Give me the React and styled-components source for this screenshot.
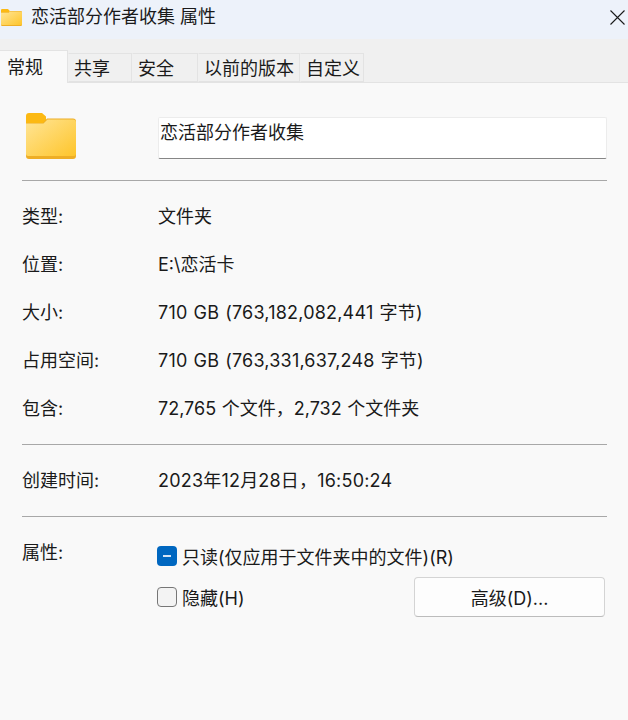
import styled, { createGlobalStyle } from "styled-components";

const GlobalStyle = createGlobalStyle`
  html, body {
    margin: 0;
    padding: 0;
    background: #f9f9f9;
  }
  body {
    font-family: Inter, "Noto Sans CJK SC", sans-serif;
    font-size: 18px;
    color: #1a1a1a;
  }
`;

const Window = styled.div`
  width: 628px;
  height: 720px;
  overflow: hidden;
  background: #f9f9f9;
`;

const TitleBar = styled.div`
  height: 39px;
  box-sizing: border-box;
  display: flex;
  align-items: center;
  background: #edf2fa;
  padding: 0 3px 5px 1px;
`;

const TitleText = styled.span`
  margin-left: 9px;
  line-height: 26px;
  flex: 1;
  white-space: nowrap;
`;

const TabStrip = styled.div`
  height: 44px;
  box-sizing: border-box;
  display: flex;
  align-items: flex-end;
  background: #f0f0f0;
  border-bottom: 1px solid #e3e3e3;
`;

const Tab = styled.div`
  box-sizing: border-box;
  width: ${({ $w }) => $w}px;
  height: ${({ $active }) => ($active ? "33px" : "29px")};
  margin-bottom: ${({ $active }) => ($active ? "-1px" : "0")};
  padding: 0 0 2px ${({ $active }) => ($active ? "7px" : "5px")};
  display: flex;
  align-items: center;
  white-space: nowrap;
  background: ${({ $active }) => ($active ? "#f9f9f9" : "#f0f0f0")};
  border: 1px solid #e3e3e3;
  border-left: ${({ $active }) => ($active ? "0" : "1px solid transparent")};
  border-bottom: ${({ $active }) => ($active ? "0" : "1px solid #e3e3e3")};
`;

const Body = styled.div`
  padding: 0 21px 0 22px;
`;

const HeaderRow = styled.div`
  height: 98px;
  box-sizing: border-box;
  display: flex;
  align-items: flex-start;
  border-bottom: 1px solid #a8a8a8;
`;

const IconCell = styled.div`
  width: 136px;
  padding: 30px 0 0 4px;
  box-sizing: border-box;
  flex: none;
`;

const NameBox = styled.div`
  margin-top: 34px;
  width: 450px;
  height: 42px;
  box-sizing: border-box;
  padding: 0 1px;
  line-height: 30px;
  background: #fff;
  border: 1px solid #ececec;
  border-bottom: 1px solid #868686;
  border-radius: 2px;
`;

const Section = styled.div`
  display: flex;
  flex-direction: column;
  padding: ${({ $pad }) => $pad};
  border-bottom: ${({ $last }) => ($last ? "0" : "1px solid #a8a8a8")};
`;

const Row = styled.div`
  height: 48px;
  line-height: 46px;
  display: flex;
  align-items: center;
`;

const Label = styled.div`
  width: 136px;
  flex: none;
`;

const Value = styled.div`
  white-space: nowrap;
  letter-spacing: ${({ $track }) => $track || 0}px;
  word-spacing: ${({ $word }) => $word || 0}px;
`;

const AttrGrid = styled.div`
  display: grid;
  grid-template-columns: 136px 1fr;
`;

const AttrLabel = styled.div`
  padding-top: 23px;
  line-height: 26px;
`;

const AttrList = styled.div`
  display: flex;
  flex-direction: column;
`;

const CheckRow = styled.div`
  height: ${({ $h }) => $h}px;
  padding-top: ${({ $top }) => $top || 0}px;
  box-sizing: border-box;
  display: flex;
  align-items: center;
  gap: 5px;
`;

const CheckMark = styled.span`
  width: 20px;
  height: 20px;
  box-sizing: border-box;
  margin-left: -1px;
  flex: none;
  display: flex;
  align-items: center;
  justify-content: center;
  border-radius: 4px;
  background: ${({ $on }) => ($on ? "#0067c0" : "#f3f3f3")};
  border: ${({ $on }) => ($on ? "0" : "1px solid #767676")};
`;

const Dash = styled.span`
  width: 8px;
  height: 2px;
  background: #d5e4f5;
`;

const AdvancedButton = styled.div`
  width: 191px;
  height: 40px;
  box-sizing: border-box;
  margin: 0 2px 0 auto;
  display: flex;
  align-items: center;
  justify-content: center;
  background: #fdfdfd;
  border: 1px solid #d4d4d4;
  border-bottom-color: #bcbcbc;
  border-radius: 4px;
`;

function FolderIcon({ width, height }) {
  return (
    <svg
      width={width}
      height={height}
      viewBox="0 0 50 46"
      preserveAspectRatio="none"
      style={{ display: "block" }}
    >
      <defs>
        <linearGradient id={`folder-${width}`} x1="0" y1="0" x2="1" y2="1">
          <stop offset="0" stopColor="#ffe596" />
          <stop offset="1" stopColor="#fec52b" />
        </linearGradient>
      </defs>
      <path d="M0 3a3 3 0 0 1 3-3h13l4 3.500v6.500H0z" fill="#fcb913" />
      <path d="M0 10h17l4-4.500h26a3 3 0 0 1 3 3V43a3 3 0 0 1-3 3H3a3 3 0 0 1-3-3z" fill="#eeae26" />
      <path d="M0 10.500h17.500l4-4h25.500a3 3 0 0 1 3 3V41a2 2 0 0 1-2 2H2a2 2 0 0 1-2-2z" fill={`url(#folder-${width})`} />
    </svg>
  );
}

function CloseIcon() {
  return (
    <svg width="15" height="15" viewBox="0 0 15 15" style={{ display: "block" }}>
      <path d="M.5.5l14 14M14.500.5l-14 14" stroke="#1a1a1a" strokeWidth="1.1" fill="none" />
    </svg>
  );
}

const tabs = [
  { name: "常规", w: 68, active: true },
  { name: "共享", w: 64 },
  { name: "安全", w: 66 },
  { name: "以前的版本", w: 102 },
  { name: "自定义", w: 64 },
];

const infoRows = [
  { label: "类型:", value: "文件夹" },
  { label: "位置:", value: "E:\\恋活卡" },
  { label: "大小:", value: "710 GB (763,182,082,441 字节)", track: 0.2, word: 0.8 },
  { label: "占用空间:", value: "710 GB (763,331,637,248 字节)", track: 0.2, word: 0.8 },
  { label: "包含:", value: "72,765 个文件，2,732 个文件夹", word: 0.6 },
];

export default function App() {
  return (
    <Window>
      <GlobalStyle />
      <TitleBar>
        <FolderIcon width={21} height={17} />
        <TitleText>恋活部分作者收集 属性</TitleText>
        <CloseIcon />
      </TitleBar>
      <TabStrip>
        {tabs.map((t) => (
          <Tab key={t.name} $w={t.w} $active={t.active}>
            {t.name}
          </Tab>
        ))}
      </TabStrip>
      <Body>
        <HeaderRow>
          <IconCell>
            <FolderIcon width={50} height={46} />
          </IconCell>
          <NameBox>恋活部分作者收集</NameBox>
        </HeaderRow>
        <Section $pad="12px 0 11px">
          {infoRows.map((r) => (
            <Row key={r.label}>
              <Label>{r.label}</Label>
              <Value $track={r.track} $word={r.word}>
                {r.value}
              </Value>
            </Row>
          ))}
        </Section>
        <Section $pad="12px 0 11px">
          <Row>
            <Label>创建时间:</Label>
            <Value $track={0.2}>2023年12月28日，16:50:24</Value>
          </Row>
        </Section>
        <Section $last $pad="0">
          <AttrGrid>
            <AttrLabel>属性:</AttrLabel>
            <AttrList>
              <CheckRow $h={59} $top={19}>
                <CheckMark $on>
                  <Dash />
                </CheckMark>
                <span>只读(仅应用于文件夹中的文件)(R)</span>
              </CheckRow>
              <CheckRow $h={42}>
                <CheckMark />
                <span>隐藏(H)</span>
                <AdvancedButton>高级(D)...</AdvancedButton>
              </CheckRow>
            </AttrList>
          </AttrGrid>
        </Section>
      </Body>
    </Window>
  );
}
